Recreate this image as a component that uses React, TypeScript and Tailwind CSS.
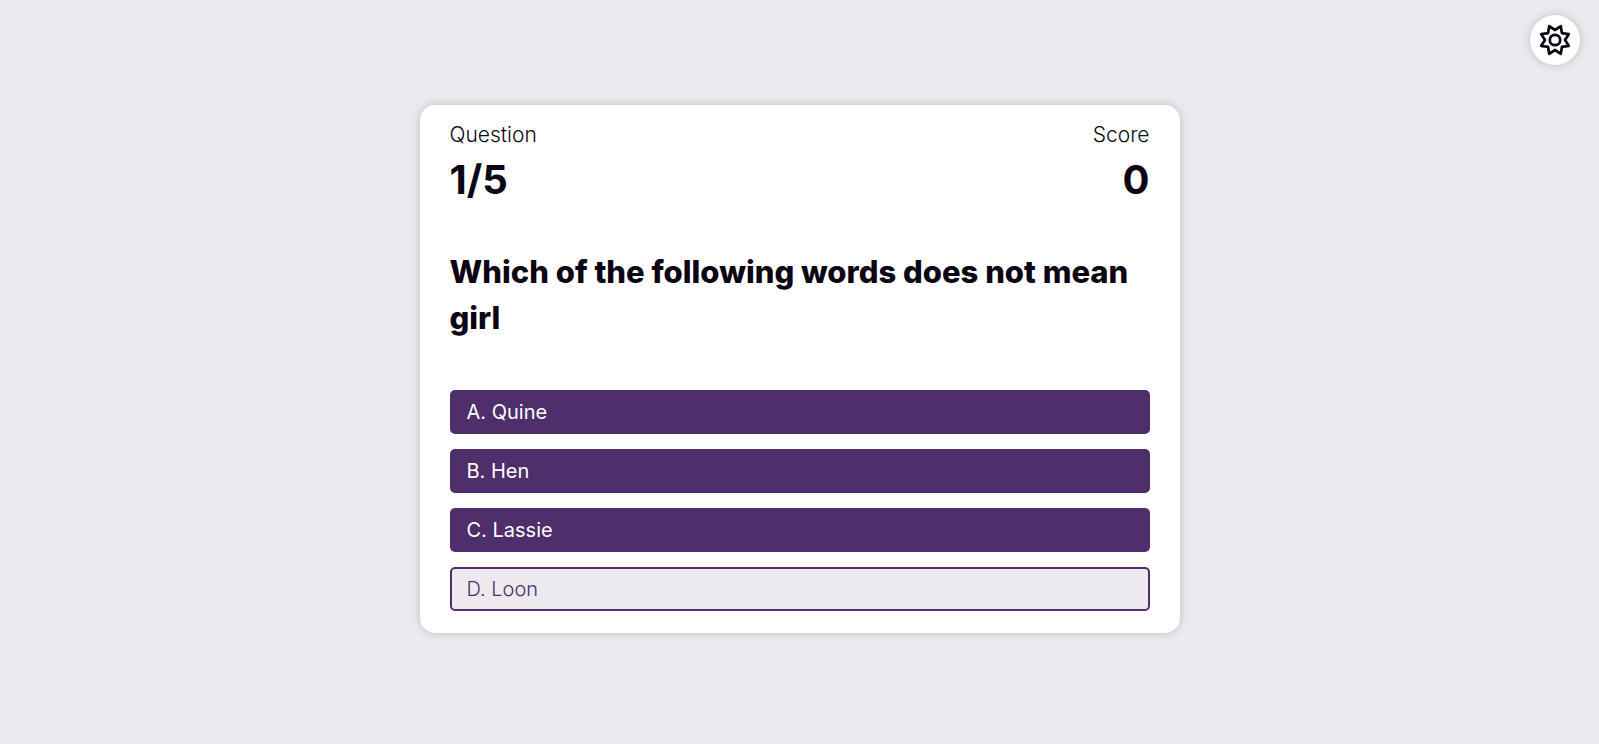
const ANSWERS = [
  { key: 'A', text: 'Quine' },
  { key: 'B', text: 'Hen' },
  { key: 'C', text: 'Lassie' },
  { key: 'D', text: 'Loon' },
];

const SELECTED = 'D';

function GearIcon() {
  return (
    <svg
      viewBox="0 0 32 32"
      className="size-8"
      fill="none"
      stroke="currentColor"
      strokeWidth="2.7"
      strokeLinejoin="round"
      aria-hidden="true"
    >
      <path d="M16 6 L21.8 2.2 L22.9 9.1 L29.8 10.2 L26 16 L29.8 21.8 L22.9 22.9 L21.8 29.8 L16 26 L10.2 29.8 L9.1 22.9 L2.2 21.8 L6 16 L2.2 10.2 L9.1 9.1 L10.2 2.2 Z" />
      <circle cx="16" cy="16" r="5.2" />
    </svg>
  );
}

function Stat({ label, value, className }: { label: string; value: string; className?: string }) {
  return (
    <div className={className}>
      <p className="text-[21px] leading-[30px] font-light">{label}</p>
      <p className="text-[40px] leading-[60px] font-bold">{value}</p>
    </div>
  );
}

export default function App() {
  return (
    <div className="relative flex min-h-screen items-center justify-center bg-[#eceaef] px-5 pt-5 pb-[26px] font-[Inter,sans-serif] text-[#0c0614]">
      <button
        type="button"
        aria-label="Settings"
        className="absolute top-[15px] right-[19px] flex size-[50px] items-center justify-center rounded-full bg-white shadow-[0_0_10px_rgba(0,0,0,0.2)]"
      >
        <GearIcon />
      </button>
      <main className="w-full max-w-[760px] rounded-[15px] bg-white px-[30px] pt-[15px] pb-[22px] shadow-[0_0_10px_rgba(0,0,0,0.2)]">
        <header className="flex justify-between">
          <Stat label="Question" value="1/5" />
          <Stat label="Score" value="0" className="text-right" />
        </header>
        <h1 className="mt-[39px] text-[31px] leading-[46px] font-extrabold">
          Which of the following words does not mean girl
        </h1>
        <div className="mt-[49px] flex flex-col gap-[15px]">
          {ANSWERS.map(({ key, text }) => (
            <button
              key={key}
              type="button"
              className={
                key === SELECTED
                  ? 'h-11 rounded-[5px] border-2 border-[#4e2e6b] bg-[#eceaef] px-[15px] text-left text-xl font-light text-[#4e2e6b]'
                  : 'h-11 rounded-[5px] border-2 border-[#4e2e6b] bg-[#4e2e6b] px-[15px] text-left text-xl text-white'
              }
            >
              {key}. {text}
            </button>
          ))}
        </div>
      </main>
    </div>
  );
}
